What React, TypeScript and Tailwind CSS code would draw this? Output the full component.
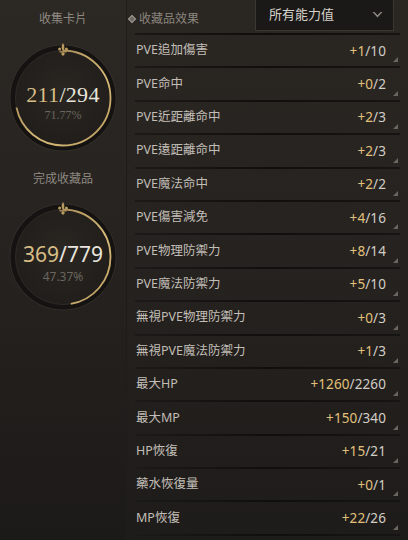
import React from 'react';

const stats: [string, string, string][] = [
  ['PVE追加傷害', '+1', '/10'],
  ['PVE命中', '+0', '/2'],
  ['PVE近距離命中', '+2', '/3'],
  ['PVE遠距離命中', '+2', '/3'],
  ['PVE魔法命中', '+2', '/2'],
  ['PVE傷害減免', '+4', '/16'],
  ['PVE物理防禦力', '+8', '/14'],
  ['PVE魔法防禦力', '+5', '/10'],
  ['無視PVE物理防禦力', '+0', '/3'],
  ['無視PVE魔法防禦力', '+1', '/3'],
  ['最大HP', '+1260', '/2260'],
  ['最大MP', '+150', '/340'],
  ['HP恢復', '+15', '/21'],
  ['藥水恢復量', '+0', '/1'],
  ['MP恢復', '+22', '/26'],
];

const cjk = "font-['Noto_Sans','Noto_Sans_CJK_TC',sans-serif]";

const Ring: React.FC<{ pct: number; id: string }> = ({ pct, id }) => (
  <svg width="116" height="116" viewBox="0 0 116 116">
    <defs>
      <radialGradient id={`in-${id}`} cx="50%" cy="45%" r="55%">
        <stop offset="0%" stopColor="#2a2723" />
        <stop offset="100%" stopColor="#201d1a" />
      </radialGradient>
      <linearGradient id={`g-${id}`} x1="1" y1="0" x2="0" y2="1">
        <stop offset="0%" stopColor="#8e7448" />
        <stop offset="60%" stopColor="#d8bb78" />
        <stop offset="100%" stopColor="#b89a5e" />
      </linearGradient>
    </defs>
    <circle cx="58" cy="60" r="53" fill="none" stroke="#36322d" strokeWidth="1" />
    <circle cx="58" cy="60" r="50" fill={`url(#in-${id})`} stroke="#151311" strokeWidth="5" />
    <circle cx="58" cy="60" r="47.5" fill="none" stroke="#2e2a25" strokeWidth="1" />
    <circle
      cx="58"
      cy="60"
      r="47.5"
      fill="none"
      stroke={`url(#g-${id})`}
      strokeWidth="1.8"
      pathLength={100}
      strokeDasharray={`${pct} 100`}
      transform="rotate(-90 58 60)"
    />
    <g fill="#b99b5f">
      <path d="M58 5 C59.6 8 60 10 58 13.5 C56 10 56.4 8 58 5 Z" />
      <circle cx="54.6" cy="11" r="1.5" />
      <circle cx="61.4" cy="11" r="1.5" />
      <rect x="54.5" y="13.2" width="7" height="1.3" />
      <path d="M58 14 L60 16 L58 18 L56 16 Z" />
    </g>
  </svg>
);

const App: React.FC = () => {
  return (
    <div className="w-[408px] h-[540px] flex overflow-hidden bg-[#221f1c]">
      <aside className="w-[127px] shrink-0 flex flex-col items-center bg-gradient-to-b from-[#2c2925] via-[#25221f] to-[#1c1a18] border-r border-[#1e1c1a]">
        <div className={`mt-[11px] text-[12px] leading-[16px] text-[#8e8981] ${cjk}`}>收集卡片</div>
        <div className="relative mt-[11px]">
          <Ring pct={71.77} id="a" />
          <div className="absolute inset-x-0 top-[44px] flex flex-col items-center">
            <div className="font-['Liberation_Serif',serif] text-[22px] leading-[26px] tracking-[0.3px]">
              <span className="text-[#d8bd85]">211</span>
              <span className="text-[#e9e5dd]">/294</span>
            </div>
            <div className="font-['Liberation_Serif',serif] text-[12px] leading-[14px] text-[#6a655e]">71.77%</div>
          </div>
        </div>
        <div className={`mt-[17px] text-[12px] leading-[16px] text-[#8e8981] ${cjk}`}>完成收藏品</div>
        <div className="relative mt-[10px]">
          <Ring pct={47.37} id="b" />
          <div className="absolute inset-x-0 top-[43px] flex flex-col items-center">
            <div className="font-['Noto_Sans',sans-serif] text-[21px] leading-[29px]">
              <span className="text-[#d8bd85]">369</span>
              <span className="text-[#e9e5dd]">/779</span>
            </div>
            <div className="font-['Noto_Sans',sans-serif] text-[12px] leading-[16px] text-[#6a655e]">47.37%</div>
          </div>
        </div>
      </aside>

      <main className="flex-1 flex flex-col bg-gradient-to-b from-[#2a2723] via-[#25221f] to-[#1e1c1a]">
        <div className="h-[35px] shrink-0 flex flex-col">
          <div className="flex-1 flex items-start">
            <div className={`flex items-center gap-[4px] pl-[2px] pt-[11px] text-[12px] leading-[16px] text-[#8a857d] ${cjk}`}>
              <span className="w-[6px] h-[6px] rotate-45 border border-[#9a958c] bg-[#6e6962]" />
              收藏品效果
            </div>
            <div className="ml-auto mr-[14px] mt-[-1px] w-[139px] h-[32px] flex items-center justify-between pl-[13px] pr-[10px] bg-[#1b1917] border border-[#3a3631]">
              <span className={`text-[13px] text-[#d6d2ca] ${cjk}`}>所有能力值</span>
              <svg width="11" height="8" viewBox="0 0 11 8">
                <path d="M0.5 1 L5.5 6.5 L10.5 1 L8.6 1 L5.5 4.2 L2.4 1 Z" fill="#8f8a82" />
              </svg>
            </div>
          </div>
          <div className="h-[2px] ml-[8px] mr-[8px] bg-gradient-to-r from-[#1a1816] via-[#0f0e0d] to-[#161412]" />
        </div>

        {stats.map(([label, gain, total], i) => (
          <div key={i} className="h-[33.4px] shrink-0 flex flex-col">
            <div className="flex-1 relative flex items-center justify-between pl-[9px] pr-[22px]">
              <span className={`text-[12.5px] text-[#c2beb7] ${cjk}`}>{label}</span>
              <span className="font-['Noto_Sans',sans-serif] text-[13.5px] tracking-[0.1px]">
                <span className="text-[#e3c07a]">{gain}</span>
                <span className="text-[#d2cec6]">{total}</span>
              </span>
              <svg className="absolute right-[10px] bottom-[4px]" width="5" height="5" viewBox="0 0 5 5">
                <path d="M5 0 L5 5 L0 5 Z" fill="#6a655e" />
              </svg>
            </div>
            <div className="h-[2px] ml-[8px] mr-[8px] bg-gradient-to-r from-[#1c1a18] via-[#100f0e] to-[#171513]" />
          </div>
        ))}
      </main>
    </div>
  );
};

export default App;
